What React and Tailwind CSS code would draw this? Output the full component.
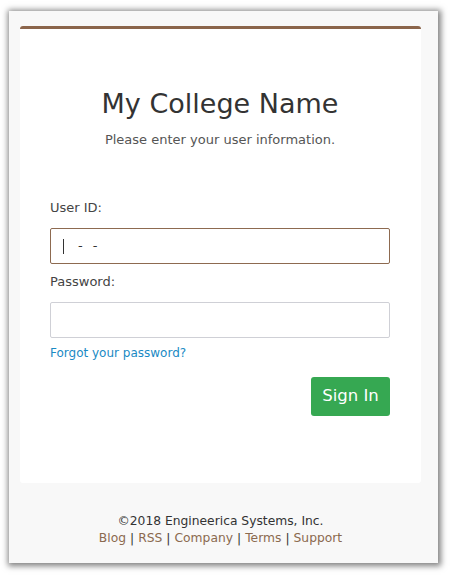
import React from 'react';

export default function App() {
  return (
    <div className="w-[450px] h-[576px] bg-white overflow-hidden pt-[11px] pl-[9px]" style={{ fontFamily: '"DejaVu Sans", Verdana, sans-serif' }}>
      <div className="w-[429px] h-[552px] bg-[#f8f8f8] shadow-[1px_1px_6px_2px_rgba(0,0,0,0.5)] pt-[15px] pl-[11px]">
        {/* card */}
        <div className="w-[401px] h-[457px] bg-white border-t-[3px] border-[#8b654b] rounded-[3px] pl-[30px] pr-[31px]">
          <h1 className="mt-[59px] text-center text-[27px] leading-[32px] text-[#333]">My College Name</h1>
          <p className="mt-[11px] text-center text-[13px] leading-[18px] text-[#555]">Please enter your user information.</p>

          <label className="block mt-[50px] text-[13px] leading-[18px] text-[#444]">User ID:</label>
          <div className="mt-[11px] h-[36px] w-[340px] border border-[#8d6a50] rounded-[2px] flex items-center pl-[12px] text-[#333]">
            <span className="inline-block w-[1px] h-[15px] bg-[#333]"></span>
            <span className="ml-[14px] text-[13px]">-</span>
            <span className="ml-[10px] text-[13px]">-</span>
          </div>

          <label className="block mt-[9px] text-[13px] leading-[18px] text-[#444]">Password:</label>
          <div className="mt-[11px] h-[36px] w-[340px] border border-[#cfd0d6] rounded-[2px]"></div>

          <a className="block mt-[6px] text-[12px] leading-[18px] text-[#1a8ac4]">Forgot your password?</a>

          <div className="flex justify-end mt-[15px]">
            <button className="w-[79px] h-[39px] bg-[#36a852] rounded-[3px] text-white text-[16.5px] pb-[1px]">Sign In</button>
          </div>
        </div>

        {/* footer */}
        <div className="mt-[30px] w-[401px] text-center text-[12.3px] leading-[17px]">
          <div className="text-[#333]">©2018 Engineerica Systems, Inc.</div>
          <div className="text-[#8b6a4f]">
            <a>Blog</a><span className="text-[#333] mx-[4px]">|</span><a>RSS</a><span className="text-[#333] mx-[4px]">|</span><a>Company</a><span className="text-[#333] mx-[4px]">|</span><a>Terms</a><span className="text-[#333] mx-[4px]">|</span><a>Support</a>
          </div>
        </div>
      </div>
    </div>
  );
}
